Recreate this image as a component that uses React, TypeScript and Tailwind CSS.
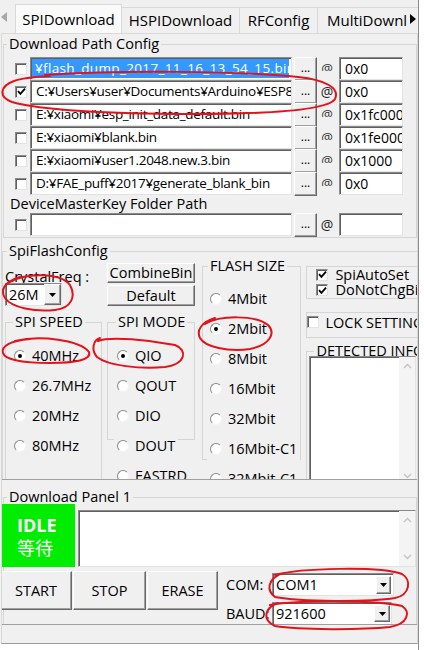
import React from 'react';

const sunken =
  'bg-white border border-t-[#8a8a8a] border-l-[#8a8a8a] border-r-[#e3e3e3] border-b-[#e3e3e3] shadow-[inset_1px_1px_0_#5f5f5f]';
const raised =
  'bg-[#f0f0f0] border border-t-white border-l-white border-r-[#696969] border-b-[#696969] shadow-[inset_-1px_-1px_0_#a0a0a0]';
const group = 'border border-[#d5d5d5]';
const inputText = 'text-[13.5px] tracking-[-0.3px]';

function Check({ on }: { on?: boolean }) {
  return (
    <span className={`w-[12px] h-[12px] shrink-0 flex items-center justify-center ${sunken}`}>
      {on && (
        <svg width="9" height="9" viewBox="0 0 9 9">
          <path d="M1 4.2 L3.4 6.8 L8 1.6" stroke="#000" strokeWidth="1.8" fill="none" />
        </svg>
      )}
    </span>
  );
}

function Radio({ on }: { on?: boolean }) {
  return (
    <span className="w-[12px] h-[12px] shrink-0 rounded-full bg-white border border-t-[#8a8a8a] border-l-[#8a8a8a] border-r-[#f4f4f4] border-b-[#f4f4f4] flex items-center justify-center">
      {on && <span className="w-[4px] h-[4px] rounded-full bg-black" />}
    </span>
  );
}

function RadioRow({ label, on }: { label: string; on?: boolean }) {
  return (
    <div className="inline-flex items-center gap-[6px] h-[30px] px-[3px] bg-[#f0f0f0] whitespace-nowrap">
      <Radio on={on} />
      <span>{label}</span>
    </div>
  );
}

function Legend({ children, ml }: { children: React.ReactNode; ml: string }) {
  return <legend className={`${ml} px-[2px] leading-[18px] whitespace-nowrap`}>{children}</legend>;
}

function DropBtn({ className }: { className: string }) {
  return (
    <span className={`${raised} flex items-center justify-center shrink-0 ${className}`}>
      <svg width="7" height="4" viewBox="0 0 7 4">
        <path d="M0 0 H7 L3.5 4 Z" fill="#000" />
      </svg>
    </span>
  );
}

function At({ full }: { full?: boolean }) {
  if (full) return <span className="w-[20px] text-center text-[14px] leading-[23px] text-[#222]">@</span>;
  return (
    <span className="w-[20px] h-[23px] flex justify-center">
      <span className="mt-[7px] h-[7px] overflow-hidden">
        <span className="block -mt-[3px] text-[13px] leading-[14px] text-[#333]">@</span>
      </span>
    </span>
  );
}

const paths = [
  { text: '¥flash_dump_2017_11_16_13_54_15.bin', addr: '0x0', sel: true },
  { text: 'C:¥Users¥user¥Documents¥Arduino¥ESP8266', addr: '0x0', on: true, full: true },
  { text: 'E:¥xiaomi¥esp_init_data_default.bin', addr: '0x1fc000' },
  { text: 'E:¥xiaomi¥blank.bin', addr: '0x1fe000' },
  { text: 'E:¥xiaomi¥user1.2048.new.3.bin', addr: '0x1000' },
  { text: 'D:¥FAE_puff¥2017¥generate_blank_bin', addr: '0x0' },
];

function PathRow({ text, addr, sel, on, full }: { text: string; addr: string; sel?: boolean; on?: boolean; full?: boolean }) {
  return (
    <div className="h-[23px] flex items-center pl-[11px]">
      <Check on={on} />
      <div className={`ml-[3px] w-[262px] h-[23px] overflow-hidden whitespace-nowrap flex items-center ${inputText} ${sunken}`}>
        {sel ? (
          <span className="ml-[1px] h-[19px] w-[257px] shrink-0 bg-[#3399ff] text-white leading-[19px] pl-[3px] tracking-[0.35px] overflow-hidden">
            {text}
          </span>
        ) : (
          <span className="pl-[5px]">{text}</span>
        )}
      </div>
      <span className={`ml-[2px] w-[23px] h-[24px] text-[12px] leading-[20px] text-center ${raised}`}>...</span>
      <At full={full} />
      <div className={`ml-[2px] w-[64px] h-[23px] overflow-hidden whitespace-nowrap pl-[5px] leading-[21px] text-[14px] ${sunken}`}>{addr}</div>
    </div>
  );
}

function ScrollBar() {
  return (
    <div className="w-[16px] h-full bg-[#f4f4f4] flex flex-col justify-between items-center py-[6px] shrink-0">
      <svg width="9" height="6" viewBox="0 0 9 6">
        <path d="M1 5 L4.5 1.5 L8 5" stroke="#c4c4c4" strokeWidth="1.4" fill="none" />
      </svg>
      <svg width="9" height="6" viewBox="0 0 9 6">
        <path d="M1 1 L4.5 4.5 L8 1" stroke="#c4c4c4" strokeWidth="1.4" fill="none" />
      </svg>
    </div>
  );
}

function TabBar() {
  return (
    <div className="h-[33px] shrink-0 flex items-end relative text-[15px]">
      <div className="w-[15px] h-full flex items-center pl-[1px]">
        <svg width="6" height="10" viewBox="0 0 6 10">
          <path d="M6 0 V10 L0 5 Z" fill="#a8a8a8" />
        </svg>
      </div>
      <div className="w-[107px] h-[29px] border border-b-0 border-[#d9d9d9] bg-[#fafafa] flex items-center justify-center">
        SPIDownload
      </div>
      <div className="w-[118px] h-[26px] border-t border-r border-[#d9d9d9] flex items-center justify-center">HSPIDownload</div>
      <div className="w-[78px] h-[26px] border-t border-r border-[#d9d9d9] flex items-center justify-center">RFConfig</div>
      <div className="w-[100px] h-[26px] border-t border-[#d9d9d9] flex items-center pl-[9px] whitespace-nowrap overflow-hidden">
        MultiDownload
      </div>
      <div className="absolute right-0 top-[8px] w-[11px] h-[22px] bg-[#f0f0f0] flex items-center justify-center">
        <svg width="6" height="10" viewBox="0 0 6 10">
          <path d="M0 0 V10 L6 5 Z" fill="#000" />
        </svg>
      </div>
    </div>
  );
}

function Annotations() {
  const p = { fill: 'none', stroke: '#e3121b', strokeWidth: 2, strokeLinecap: 'round' as const };
  return (
    <svg className="absolute inset-0 pointer-events-none" width="424" height="650" viewBox="0 0 424 650">
      <path {...p} d="M45 75 C120 70 240 71 298 77 C326 80 340 88 335 99 C328 110 270 114 190 114 C110 114 40 110 12 102 C-2 97 0 86 14 81 C22 78 32 77 50 76" />
      <path {...p} d="M10 282 C25 273 60 272 70 285 C76 296 72 308 55 310 C35 312 12 308 5 298 C0 290 4 282 20 277" />
      <path {...p} d="M15 341 C40 335 80 340 89 352 C92 360 75 363 50 363 C25 363 5 360 3 353 C1 346 10 341 30 339" />
      <path {...p} d="M98 341 C110 336 150 340 175 345 C188 350 186 364 165 367 C140 369 108 366 97 357 C91 350 93 340 100 338" />
      <path {...p} d="M205 324 C220 315 255 315 268 325 C276 333 270 345 250 349 C228 352 205 347 200 338 C196 330 202 322 215 318" />
      <path {...p} d="M275 575 C300 568 380 566 402 574 C412 580 410 595 395 598 C370 602 300 602 275 597 C266 590 268 580 280 574" />
      <path {...p} d="M270 605 C300 600 380 600 402 606 C411 612 408 624 390 627 C360 630 300 630 275 626 C262 620 264 608 278 603" />
    </svg>
  );
}

export default function App() {
  return (
    <div className="relative w-[424px] h-[650px] overflow-hidden bg-[#f0f0f0] text-[14.5px] text-black font-['Open_Sans',sans-serif] flex">
      <div className="w-[418px] flex flex-col">
        <TabBar />
        <div className="ml-[1px] flex-1 border border-[#d9d9d9] border-b-[#9a9a9a] flex flex-col overflow-hidden">
          {/* Download Path Config */}
          <fieldset className={`ml-[1px] w-[414px] pt-[3px] pb-[1px] ${group}`}>
            <legend className="ml-[3px] px-[2px] leading-[20px]">Download Path Config</legend>
            {paths.map((r, i) => (
              <PathRow key={i} {...r} />
            ))}
            <div className="h-[18px] leading-[18px] pl-[6px]">DeviceMasterKey Folder Path</div>
            <PathRow text="" addr="" full />
          </fieldset>

          {/* SpiFlashConfig */}
          <div className="h-[242px] shrink-0 overflow-hidden border-b border-[#a0a0a0] pt-[4px]">
            <fieldset className={`w-[430px] h-[300px] ${group}`}>
              <Legend ml="ml-[4px]">SpiFlashConfig</Legend>
              <div className="flex items-start pl-[2px]">
                {/* col A */}
                <div className="w-[97px] flex flex-col">
                  <div className="mt-[8px] h-[18px] leading-[18px] whitespace-nowrap">CrystalFreq :</div>
                  <div className={`-mt-[3px] w-[57px] h-[23px] flex items-center ${sunken}`}>
                    <span className="pl-[3px] flex-1">26M</span>
                    <DropBtn className="w-[17px] h-[21px]" />
                  </div>
                  <fieldset className={`mt-[7px] h-[200px] ${group}`}>
                    <Legend ml="ml-[7px]">SPI SPEED</Legend>
                    <div className="flex flex-col items-start pl-[5px] pt-[10px]">
                      <RadioRow label="40MHz" on />
                      <RadioRow label="26.7MHz" />
                      <RadioRow label="20MHz" />
                      <RadioRow label="80MHz" />
                    </div>
                  </fieldset>
                </div>
                {/* col B */}
                <div className="ml-[5px] w-[88px] flex flex-col">
                  <div className={`mt-[3px] h-[20px] leading-[18px] text-center ${raised}`}>CombineBin</div>
                  <div className={`mt-[2px] h-[21px] leading-[19px] text-center ${raised}`}>Default</div>
                  <fieldset className={`mt-[7px] h-[127px] ${group}`}>
                    <Legend ml="ml-[8px]">SPI MODE</Legend>
                    <div className="flex flex-col items-start pl-[6px] pt-[10px]">
                      <RadioRow label="QIO" on />
                      <RadioRow label="QOUT" />
                      <RadioRow label="DIO" />
                      <RadioRow label="DOUT" />
                      <RadioRow label="FASTRD" />
                    </div>
                  </fieldset>
                </div>
                {/* col C */}
                <fieldset className={`ml-[7px] -mt-[3px] w-[96px] h-[203px] ${group}`}>
                  <Legend ml="ml-[5px]">FLASH SIZE</Legend>
                  <div className="flex flex-col items-start pl-[4px] pt-[9px]">
                    <RadioRow label="4Mbit" />
                    <RadioRow label="2Mbit" on />
                    <RadioRow label="8Mbit" />
                    <RadioRow label="16Mbit" />
                    <RadioRow label="32Mbit" />
                    <RadioRow label="16Mbit-C1" />
                    <RadioRow label="32Mbit-C1" />
                  </div>
                </fieldset>
                {/* col D */}
                <div className="ml-[5px] w-[125px] flex flex-col">
                  <div className={`mt-[6px] h-[33px] flex flex-col justify-center pl-[9px] leading-[16px] ${group}`}>
                    <div className="h-[15px] flex items-center gap-[7px] whitespace-nowrap">
                      <Check on />
                      <span>SpiAutoSet</span>
                    </div>
                    <div className="h-[16px] flex items-center gap-[7px] whitespace-nowrap">
                      <Check on />
                      <span>DoNotChgBin</span>
                    </div>
                  </div>
                  <div className={`mt-[13px] h-[26px] flex items-start pt-[3px] gap-[6px] whitespace-nowrap ${group}`}>
                    <Check />
                    <span className="leading-[14px]">LOCK SETTINGS</span>
                  </div>
                  <fieldset className={`mt-[4px] h-[200px] ${group}`}>
                    <Legend ml="ml-[7px]">DETECTED INFO</Legend>
                    <div className={`-mt-[4px] ml-[2px] w-[107px] h-[130px] flex justify-end ${sunken}`}>
                      <ScrollBar />
                    </div>
                  </fieldset>
                </div>
              </div>
            </fieldset>
          </div>

          {/* Download Panel 1 */}
          <div className="h-[145px] shrink-0 overflow-hidden border-b border-[#a0a0a0] pt-[8px]">
            <fieldset className={`ml-[1px] w-[414px] h-[200px] ${group}`}>
              <Legend ml="ml-[3px]">Download Panel 1</Legend>
              <div className="-mt-[2px] flex items-end">
                <div className="-ml-[3px] w-[74px] h-[63px] bg-[#00ec00] text-white flex flex-col justify-center pl-[16px]">
                  <span className="text-[18px] font-bold leading-[22px]">IDLE</span>
                  <span className="text-[18px] leading-[22px] font-['Noto_Sans_CJK_JP',sans-serif]">等待</span>
                </div>
                <div className={`ml-[3px] w-[338px] h-[57px] flex justify-end ${sunken}`}>
                  <ScrollBar />
                </div>
              </div>
              <div className="mt-[4px] -ml-[4px] flex items-start">
                <div className={`w-[72px] h-[39px] flex items-center justify-center ${raised}`}>START</div>
                <div className={`ml-[1px] w-[73px] h-[39px] flex items-center justify-center ${raised}`}>STOP</div>
                <div className={`ml-[1px] w-[71px] h-[39px] flex items-center justify-center ${raised}`}>ERASE</div>
                <div className="ml-[8px] mt-[2px] flex flex-col gap-[6px]">
                  <div className="h-[23px] flex items-center">
                    <span className="w-[46px]">COM:</span>
                    <div className={`w-[122px] h-[23px] flex items-center ${sunken}`}>
                      <span className="pl-[3px] flex-1">COM1</span>
                      <DropBtn className="w-[15px] h-[18px] mr-[2px]" />
                    </div>
                  </div>
                  <div className="h-[23px] flex items-center">
                    <span className="w-[46px]">BAUD:</span>
                    <div className={`w-[120px] h-[23px] flex items-center ${sunken}`}>
                      <span className="pl-[3px] flex-1">921600</span>
                      <DropBtn className="w-[16px] h-[17px] mr-[1px]" />
                    </div>
                  </div>
                </div>
              </div>
            </fieldset>
          </div>
          <div className="flex-1" />
        </div>
        <div className="h-[6px] shrink-0 bg-white" />
      </div>
      <div className="w-[6px] border-l border-[#8c8c8c] bg-white" />
      <Annotations />
    </div>
  );
}
